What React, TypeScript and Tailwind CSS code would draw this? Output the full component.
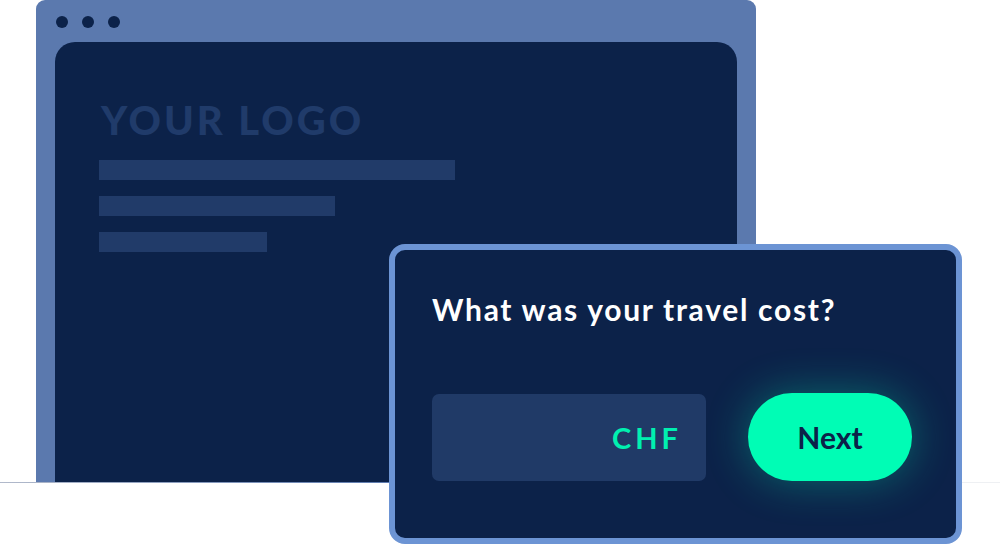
import React from "react";

const font = { fontFamily: "Lato, 'Noto Sans', sans-serif" };

function BrowserFrame() {
  return (
    <div className="ml-[36px] w-[720px] h-[482px] rounded-t-[9px] bg-[#5b79ae] px-[19px] pt-[16px] flex flex-col">
      <div className="flex gap-[14px] pl-[1px]">
        <span className="block w-[12px] h-[12px] rounded-full bg-[#0c2249]" />
        <span className="block w-[12px] h-[12px] rounded-full bg-[#0c2249]" />
        <span className="block w-[12px] h-[12px] rounded-full bg-[#0c2249]" />
      </div>
      <div className="mt-[14px] flex-1 rounded-t-[20px] bg-[#0c2249] pl-[44px] pt-[58px]">
        <div
          className="text-[40px] leading-none font-black tracking-[3px] text-[#203b6a] pl-[2px]"
          style={font}
        >
          YOUR LOGO
        </div>
        <div className="mt-[20px] flex flex-col gap-[16px]">
          <div className="h-[20px] w-[356px] bg-[#213b69]" />
          <div className="h-[20px] w-[236px] bg-[#213b69]" />
          <div className="h-[20px] w-[168px] bg-[#213b69]" />
        </div>
      </div>
    </div>
  );
}

function QuestionCard() {
  return (
    <div className="absolute left-[389px] top-[244px] w-[573px] h-[300px] rounded-[16px] border-[6px] border-[#6c94d4] bg-[#0c2249] pl-[37px] pt-[44px]" style={font}>
      <div className="text-[30px] leading-none font-bold tracking-[1.7px] text-white">What was your travel cost?</div>
      <div className="mt-[69px] flex items-center gap-[42px]">
        <div className="w-[274px] h-[87px] rounded-[7px] bg-[#203a67] flex items-center justify-end pr-[24px]">
          <span className="text-[29px] leading-none font-bold tracking-[4px] text-[#00f0b0]">CHF</span>
        </div>
        <button className="w-[164px] h-[88px] rounded-full bg-[#00fdb5] text-[30px] leading-none font-bold text-[#0c2249] shadow-[0_0_44px_rgba(0,253,181,0.32)]">
          Next
        </button>
      </div>
    </div>
  );
}

export default function App() {
  return (
    <div className="relative w-[1000px] h-[545px] bg-white overflow-hidden">
      <BrowserFrame />
      <div className="h-px w-full bg-[linear-gradient(to_right,#b2bacb_0%,#5b79ae_40%,#eef0f3_60%,#eef0f3_100%)]" />
      <QuestionCard />
    </div>
  );
}
